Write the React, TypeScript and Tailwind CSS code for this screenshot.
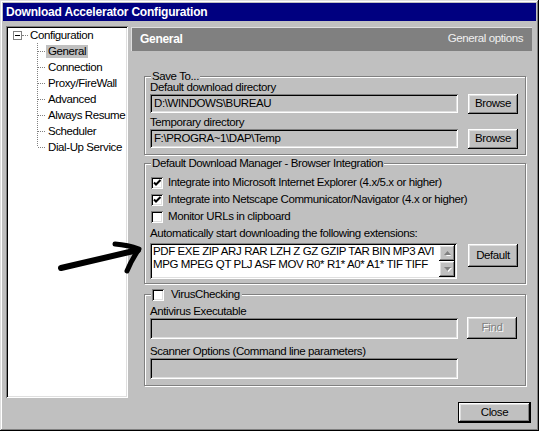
import React from 'react';

const raised =
  'shadow-[inset_-1px_-1px_#000,inset_1px_1px_#fff,inset_-2px_-2px_#808080,inset_2px_2px_#dfdfdf]';
const sunken =
  'shadow-[inset_1px_1px_#808080,inset_-1px_-1px_#fff,inset_2px_2px_#000,inset_-2px_-2px_#dfdfdf]';

const Button: React.FC<{ label: string; className?: string; disabled?: boolean }> = ({ label, className = '', disabled }) => (
  <div
    className={`flex items-center justify-center bg-[#c0c0c0] ${raised} ${
      disabled ? 'text-[#808080] [text-shadow:1px_1px_0_#fff]' : 'text-black'
    } ${className}`}
  >
    {label}
  </div>
);

const Field: React.FC<{ value?: string; className?: string }> = ({ value, className = '' }) => (
  <div className={`bg-[#c0c0c0] ${sunken} flex items-center pl-[4px] ${className}`}>{value}</div>
);

const CheckBox: React.FC<{ checked?: boolean }> = ({ checked }) => (
  <div className={`w-[12px] h-[12px] bg-white shrink-0 ${sunken}`}>
    {checked && (
      <svg width="12" height="12" viewBox="0 0 12 12">
        <path d="M3 5.5 L5 7.5 L9.5 3" fill="none" stroke="#000" strokeWidth="2" />
      </svg>
    )}
  </div>
);

const Group: React.FC<{ legend: React.ReactNode; className?: string; children: React.ReactNode }> = ({
  legend,
  className = '',
  children,
}) => (
  <div className={`relative ml-[13px] w-[382px] border border-[#808080] shadow-[inset_1px_1px_#fff,1px_1px_#fff] ${className}`}>
    <div className="absolute top-[-7px] left-[6px] px-[1px] bg-[#c0c0c0] leading-[13px] flex items-center">{legend}</div>
    {children}
  </div>
);

const TreeChild: React.FC<{ label: string; last?: boolean; selected?: boolean }> = ({ label, last, selected }) => (
  <div className="flex items-center h-[16px] ml-[24px]">
    <svg width="9" height="16" viewBox="0 0 9 16" className="shrink-0">
      <line x1="0.5" y1="0" x2="0.5" y2={last ? 8 : 16} stroke="#808080" strokeDasharray="1 1" />
      <line x1="1" y1="8.5" x2="9" y2="8.5" stroke="#808080" strokeDasharray="1 1" />
    </svg>
    <span className={`px-[2px] leading-[13px] h-[13px] ${selected ? 'bg-[#c0c0c0]' : ''}`}>{label}</span>
  </div>
);

const ScrollArrow: React.FC<{ up?: boolean }> = ({ up }) => (
  <div className={`w-[16px] h-[16px] bg-[#c0c0c0] ${raised} flex items-center justify-center`}>
    <svg width="9" height="6" viewBox="0 0 9 6">
      {up ? (
        <>
          <path d="M2 5 L4.5 2 L7 5 Z" fill="#fff" transform="translate(1 1)" />
          <path d="M1 5 L4.5 1 L8 5 Z" fill="#808080" />
        </>
      ) : (
        <>
          <path d="M1 1 L4.5 5 L8 1 Z" fill="#fff" transform="translate(1 1)" />
          <path d="M1 1 L4.5 5 L8 1 Z" fill="#808080" />
        </>
      )}
    </svg>
  </div>
);

export default function App() {
  const items = ['General', 'Connection', 'Proxy/FireWall', 'Advanced', 'Always Resume', 'Scheduler', 'Dial-Up Service'];

  return (
    <div className="relative w-[539px] h-[431px] bg-[#c0c0c0] p-[3px] flex flex-col whitespace-nowrap text-[11.5px] tracking-[-0.4px] text-black font-['Liberation_Sans',Arial,sans-serif] shadow-[inset_-1px_-1px_#000,inset_1px_1px_#dfdfdf,inset_-2px_-2px_#808080,inset_2px_2px_#fff]">
      {/* title bar */}
      <div className="h-[18px] bg-[#000080] text-white font-bold flex items-center px-[3px] text-[12px] tracking-[-0.2px]">
        Download Accelerator Configuration
      </div>

      <div className="flex mt-[5px] ml-[3px] h-[372px]">
        {/* tree */}
        <div className={`w-[122px] h-full bg-white ${sunken} pt-[2px] pl-[7px] overflow-hidden`}>
          <div className="flex items-center h-[15px]">
            <div className="w-[9px] h-[9px] border border-[#808080] bg-white flex items-center justify-center shrink-0">
              <div className="w-[5px] h-px bg-black" />
            </div>
            <div className="w-[6px] border-t border-dotted border-[#808080]" />
            <span className="pl-[2px] leading-[13px]">Configuration</span>
          </div>
          {items.map((it, i) => (
            <TreeChild key={it} label={it} selected={i === 0} last={i === items.length - 1} />
          ))}
        </div>

        {/* right panel */}
        <div className="ml-[3px] w-[401px] pt-[1px] flex flex-col">
          <div className="h-[24px] bg-[#808080] text-white flex items-center justify-between pl-[9px] pr-[9px] shadow-[inset_1px_1px_#dfdfdf]">
            <span className="font-bold text-[12px] tracking-[-0.3px]">General</span>
            <span className="text-[#f0f0f0]">General options</span>
          </div>

          <Group legend="Save To..." className="mt-[25px] h-[79px]">
            <div className="pt-[4px] pl-[5px]">
              <div className="h-[13px] leading-[13px]">Default download directory</div>
              <div className="flex">
                <Field value="D:\WINDOWS\BUREAU" className="w-[308px] h-[19px]" />
                <Button label="Browse" className="ml-[10px] w-[50px] h-[20px]" />
              </div>
              <div className="h-[13px] leading-[13px] mt-[2px]">Temporary directory</div>
              <div className="flex">
                <Field value="F:\PROGRA~1\DAP\Temp" className="w-[308px] h-[19px]" />
                <Button label="Browse" className="ml-[10px] w-[50px] h-[20px]" />
              </div>
            </div>
          </Group>

          <Group legend="Default Download Manager - Browser Integration" className="mt-[8px] h-[121px]">
            <div className="pt-[10px] pl-[5px]">
              {[
                ['Integrate into Microsoft Internet Explorer (4.x/5.x or higher)', true],
                ['Integrate into Netscape Communicator/Navigator (4.x or higher)', true],
                ['Monitor URLs in clipboard', false],
              ].map(([label, checked]) => (
                <div key={label as string} className="h-[17px] flex items-center pl-[1px]">
                  <CheckBox checked={checked as boolean} />
                  <span className="ml-[5px]">{label as string}</span>
                </div>
              ))}
              <div className="h-[13px] leading-[13px] mt-[2px]">Automatically start downloading the following extensions:</div>
              <div className="flex mt-[3px]">
                <div className={`w-[307px] h-[36px] bg-white ${sunken} flex p-[2px]`}>
                  <div className="flex-1 pl-[1px] leading-[13px] overflow-hidden">
                    <div>PDF EXE ZIP ARJ RAR LZH Z GZ GZIP TAR BIN MP3 AVI</div>
                    <div>MPG MPEG QT PLJ ASF MOV R0* R1* A0* A1* TIF TIFF</div>
                  </div>
                  <div className="flex flex-col">
                    <ScrollArrow up />
                    <ScrollArrow />
                  </div>
                </div>
                <Button label="Default" className="ml-[11px] mt-[1px] w-[50px] h-[23px]" />
              </div>
            </div>
          </Group>

          <Group
            legend={
              <>
                <CheckBox />
                <span className="ml-[7px] pr-[1px]">VirusChecking</span>
              </>
            }
            className="mt-[10px] h-[92px]"
          >
            <div className="pt-[10px] pl-[5px]">
              <div className="h-[13px] leading-[13px]">Antivirus Executable</div>
              <div className="flex">
                <Field className="w-[308px] h-[21px]" />
                <Button label="Find" disabled className="ml-[9px] mt-[-1px] w-[50px] h-[22px]" />
              </div>
              <div className="h-[13px] leading-[13px] mt-[6px]">Scanner Options (Command line parameters)</div>
              <Field className="w-[308px] h-[21px]" />
            </div>
          </Group>
        </div>
      </div>

      <div className="flex justify-end pr-[5px] mt-[4px]">
        <div className="w-[73px] h-[21px] border border-black">
          <Button label="Close" className="w-full h-full" />
        </div>
      </div>

      {/* hand-drawn annotation arrow */}
      <svg className="absolute left-0 top-0 pointer-events-none" width="539" height="431" viewBox="0 0 539 431">
        <path d="M61 268 L138 250" stroke="#000" strokeWidth="6" strokeLinecap="round" fill="none" />
        <path d="M115 244 Q128 245 139 249 Q132 259 127 271" stroke="#000" strokeWidth="5" strokeLinecap="round" strokeLinejoin="round" fill="none" />
      </svg>
    </div>
  );
}
